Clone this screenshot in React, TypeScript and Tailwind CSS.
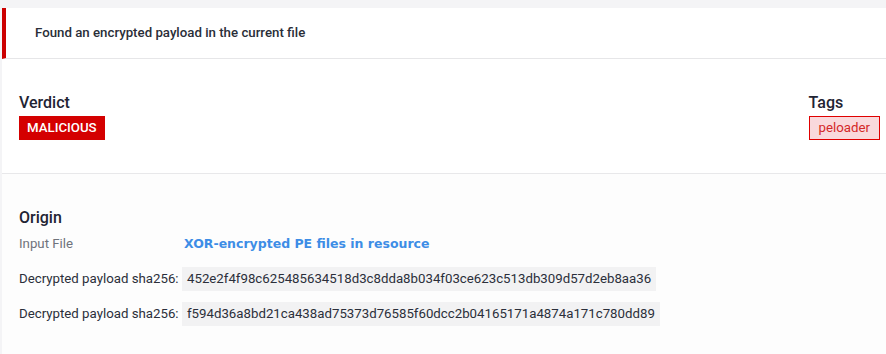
import React from 'react'

const hashes = [
  '452e2f4f98c625485634518d3c8dda8b034f03ce623c513db309d57d2eb8aa36',
  'f594d36a8bd21ca438ad75373d76585f60dcc2b04165171a4874a171c780dd89',
]

export default function App() {
  return (
    <div className="w-[886px] h-[354px] overflow-hidden bg-[#f4f4f6] pl-[2px] pt-[8px] font-['Roboto','Liberation_Sans',sans-serif] text-[13.25px] text-[#2b2f3a]">
      <div className="bg-white">
        <div className="flex items-center h-[51px] border-l-4 border-[#cc0000] pl-[29px] border-b border-b-[#e6e6e8] font-medium text-[#2a2e38]">
          Found an encrypted payload in the current file
        </div>

        <div className="flex justify-between h-[115px] pl-[17px] pr-[6px] pt-[34px] border-b border-[#e8e8ea]">
          <div>
            <div className="text-[16px] font-medium leading-[20px] text-[#1f2433]">Verdict</div>
            <div className="mt-[3px] inline-flex items-center h-[24px] px-[8px] bg-[#d40000] text-white font-medium uppercase">
              Malicious
            </div>
          </div>
          <div>
            <div className="text-[16px] font-medium leading-[20px] text-[#1f2433]">Tags</div>
            <div className="mt-[3px] inline-flex items-center h-[24px] px-[9px] bg-[#f9d9dc] border border-[#e00000] text-[#d42828]">
              peloader
            </div>
          </div>
        </div>

        <div className="bg-[#fdfdfd] h-[200px] pl-[17px] pt-[34px]">
          <div className="text-[16px] font-medium leading-[20px] text-[#1f2433]">Origin</div>
          <div className="flex items-center mt-[6px] h-[20px]">
            <span className="w-[165px] text-[#6f737b]">Input File</span>
            <span className="font-['DejaVu_Sans',sans-serif] font-bold text-[12.5px] text-[#3d8de6]">XOR-encrypted PE files in resource</span>
          </div>
          <div className="flex flex-col gap-[11px] mt-[13px]">
            {hashes.map((h) => (
              <div key={h} className="flex items-center">
                <span className="w-[163px] text-[#2b2f3a]">Decrypted payload sha256:</span>
                <span className="bg-[#f2f2f3] px-[5px] h-[24px] flex items-center text-[#2b2f3a]">{h}</span>
              </div>
            ))}
          </div>
        </div>
      </div>
    </div>
  )
}
